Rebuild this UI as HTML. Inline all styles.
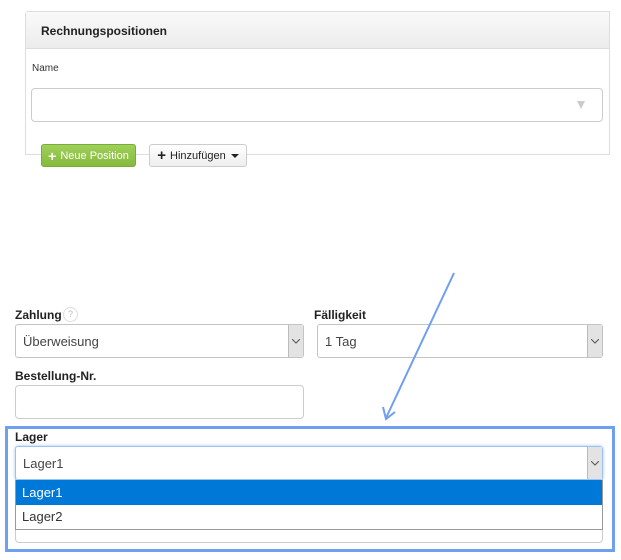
<!DOCTYPE html>
<html><head><meta charset="utf-8"><style>
*{box-sizing:border-box;margin:0;padding:0}
body{width:621px;height:560px;background:#fff;position:relative;overflow:hidden;font-family:"Liberation Sans",Arial,sans-serif;color:#222}
.a{position:absolute}
.lbl{font-size:12px;font-weight:bold;color:#222}
.sel{position:absolute;border:1px solid #c4c4c4;border-radius:3px;background:#fff;font-size:13px;color:#444;padding-left:7px;display:flex;align-items:center}
.dd{position:absolute;right:0;top:0;bottom:0;width:15px;background:#e3e3e3;border-left:1px solid #bbb;display:flex;align-items:center;justify-content:center}
</style></head><body>
<div class="a" style="left:25px;top:11px;width:585px;height:144px;border:1px solid #ddd;border-radius:3px 0 0 0"></div>
<div class="a" style="left:26px;top:12px;width:583px;height:37px;background:linear-gradient(#fafafa,#ececec);border-bottom:1px solid #ddd"></div>
<div class="a lbl" style="left:41px;top:24px;font-size:12px">Rechnungspositionen</div>
<div class="a" style="left:32px;top:63px;font-size:10px;color:#333">Name</div>
<div class="a" style="left:31px;top:88px;width:572px;height:34px;border:1px solid #ccc;border-radius:4px;background:#fff"></div>
<div class="a" style="left:577px;top:101px;width:0;height:0;border-left:4px solid transparent;border-right:4px solid transparent;border-top:8px solid #ccc"></div>
<div class="a" style="left:41px;top:144px;width:95px;height:23px;background:linear-gradient(#9fd05a,#86bb3e);border:1px solid #7aad36;border-radius:3px;color:#fff;font-size:11px;display:flex;align-items:center;justify-content:center"><b style="font-size:14px;margin-right:4px">+</b>Neue Position</div>
<div class="a" style="left:149px;top:144px;width:98px;height:23px;background:linear-gradient(#fff,#eee);border:1px solid #ccc;border-radius:3px;color:#222;font-size:11px;display:flex;align-items:center;justify-content:center"><b style="font-size:15px;margin-right:4px">+</b>Hinzufügen<span style="margin-left:5px;border-left:4px solid transparent;border-right:4px solid transparent;border-top:4px solid #222"></span></div>
<div class="a lbl" style="left:15px;top:308px">Zahlung</div>
<div class="a" style="left:63px;top:307px;width:15px;height:15px;border:1px solid #ddd;border-radius:50%;font-size:9px;color:#bbb;text-align:center;line-height:13px">?</div>
<div class="sel" style="left:15px;top:324px;width:289px;height:34px">Überweisung<div class="dd"><svg width="8" height="5"><polyline points="0,0 4,4 8,0" fill="none" stroke="#555"/></svg></div></div>
<div class="a lbl" style="left:314px;top:308px">Fälligkeit</div>
<div class="sel" style="left:317px;top:324px;width:286px;height:34px">1 Tag<div class="dd"><svg width="8" height="5"><polyline points="0,0 4,4 8,0" fill="none" stroke="#555"/></svg></div></div>
<div class="a lbl" style="left:15px;top:369px">Bestellung-Nr.</div>
<div class="a" style="left:15px;top:385px;width:289px;height:34px;border:1px solid #ccc;border-radius:4px"></div>
<div class="a" style="left:5px;top:426px;width:610px;height:126px;border:3px solid #6f9ff0"></div>
<div class="a lbl" style="left:15px;top:430px">Lager</div>
<div class="a" style="left:15px;top:446px;width:588px;height:97px;border:1px solid #ccc;border-radius:4px"></div>
<div class="sel" style="left:15px;top:446px;width:588px;height:34px;border-color:#9cc3f0;box-shadow:0 0 3px #9cc3f0">Lager1<div class="dd"><svg width="8" height="5"><polyline points="0,0 4,4 8,0" fill="none" stroke="#555"/></svg></div></div>
<div class="a" style="left:15px;top:480px;width:588px;height:50px;border:1px solid #999;border-top:none;background:#fff"></div>
<div class="a" style="left:16px;top:480px;width:586px;height:25px;background:#0078d7;color:#fff;font-size:13px;padding-left:6px;line-height:25px">Lager1</div>
<div class="a" style="left:16px;top:505px;width:586px;height:24px;color:#333;font-size:13px;padding-left:6px;line-height:24px">Lager2</div>
<svg class="a" style="left:0;top:0" width="621" height="560"><line x1="454" y1="273" x2="386" y2="418" stroke="#6f9ff0" stroke-width="2"/><polyline points="383,407 386,419 395,412" fill="none" stroke="#6f9ff0" stroke-width="2"/></svg>
</body></html>
